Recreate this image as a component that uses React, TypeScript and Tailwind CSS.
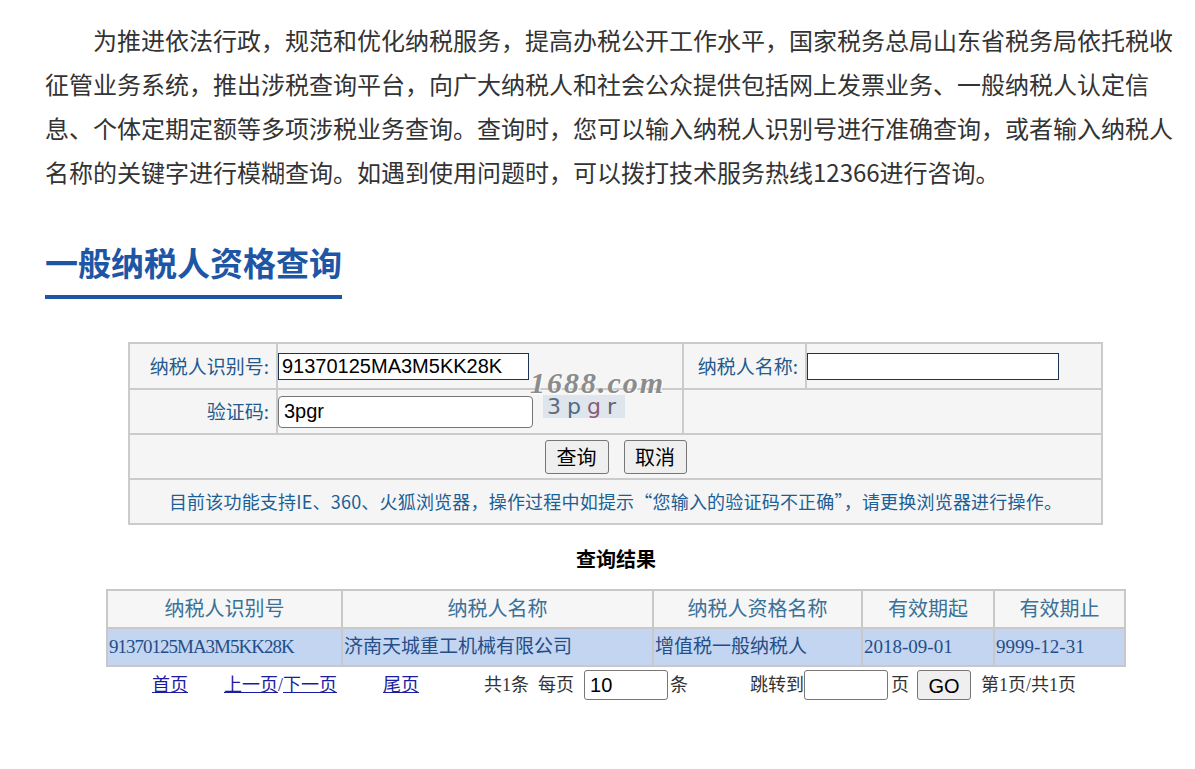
import React from 'react';

const cjk = '"Noto Sans CJK SC", "Noto Sans", sans-serif';
const serif = '"Liberation Serif", "Noto Sans CJK SC", serif';

const resultCols = [
  { title: '纳税人识别号', width: 'w-[235px]', value: '91370125MA3M5KK28K', extra: 'text-[18px] tracking-[-1px]' },
  { title: '纳税人名称', width: 'w-[311px]', value: '济南天城重工机械有限公司', extra: '' },
  { title: '纳税人资格名称', width: 'w-[209px]', value: '增值税一般纳税人', extra: '' },
  { title: '有效期起', width: 'w-[132px]', value: '2018-09-01', extra: 'text-[18px]' },
  { title: '有效期止', width: 'w-[131px]', value: '9999-12-31', extra: 'text-[18px]' },
];

const QueryForm: React.FC = () => (
  <div className="relative ml-[83px] mt-[43px] w-[973px]">
    <table className="w-[973px] table-fixed border-collapse border-2 border-[#cbcbcb] bg-[#f5f5f5] text-[19px]">
      <colgroup>
        <col className="w-[148px]" />
        <col className="w-[406px]" />
        <col className="w-[123px]" />
        <col className="w-[296px]" />
      </colgroup>
      <tbody>
        <tr className="h-[46px]">
          <td className="border-2 border-[#cbcbcb] pr-[7px] text-right text-[#245a8d]">纳税人识别号:</td>
          <td className="border-2 border-[#cbcbcb] pl-0">
            <input
              readOnly
              value="91370125MA3M5KK28K"
              className="block h-[27px] w-[251px] border border-[#1c3557] bg-white px-[3px] text-[20px] text-black outline-none [font-family:'Liberation_Sans',Arial,sans-serif]"
            />
          </td>
          <td className="border-2 border-[#cbcbcb] pr-[7px] text-right text-[#245a8d]">纳税人名称:</td>
          <td className="border-2 border-[#cbcbcb]">
            <input
              readOnly
              value=""
              className="block h-[27px] w-[252px] border border-[#1c3557] bg-white px-[3px] text-[20px] outline-none"
            />
          </td>
        </tr>
        <tr className="h-[45px]">
          <td className="border-2 border-[#cbcbcb] pr-[7px] text-right text-[#245a8d]">验证码:</td>
          <td className="border-2 border-[#cbcbcb]">
            <div className="flex items-center">
              <input
                readOnly
                value="3pgr"
                className="block h-[32px] w-[255px] rounded-[4px] border border-[#767676] bg-white px-[5px] text-[20px] text-black outline-none [font-family:'Liberation_Sans',Arial,sans-serif]"
              />
              <div className="ml-[10px] -mt-[10px] flex h-[23px] w-[82px] items-center bg-[#dfe5ec] pl-[4px] text-[22px] leading-none tracking-[6px] [font-family:'DejaVu_Sans',sans-serif]">
                <span className="text-[#5c6b7e]">3</span>
                <span className="text-[#4e6a86]">p</span>
                <span className="text-[#8a5a74]">g</span>
                <span className="text-[#5d6670]">r</span>
              </div>
            </div>
          </td>
          <td colSpan={2} className="border-2 border-[#cbcbcb]" />
        </tr>
        <tr className="h-[45px]">
          <td colSpan={4} className="border-2 border-[#cbcbcb] text-center">
            <div className="flex justify-center gap-[15px]">
              <button className="h-[34px] w-[64px] rounded-[3px] border border-[#767676] bg-[#efefef] text-[20px] text-black">查询</button>
              <button className="h-[34px] w-[63px] rounded-[3px] border border-[#767676] bg-[#efefef] text-[20px] text-black">取消</button>
            </div>
          </td>
        </tr>
        <tr className="h-[45px]">
          <td colSpan={4} className="border-2 border-[#cbcbcb] text-center text-[18px] tracking-[0.2px] text-[#1c5f95]">
            目前该功能支持IE、360、火狐浏览器，操作过程中如提示“您输入的验证码不正确”，请更换浏览器进行操作。
          </td>
        </tr>
      </tbody>
    </table>
    <span
      className="pointer-events-none absolute left-[402px] top-[26px] text-[30px] font-bold italic leading-none tracking-[2px] text-[#8c8c8c] [text-shadow:1px_1px_0_#ffffff]"
      style={{ fontFamily: serif }}
    >
      1688.com
    </span>
  </div>
);

const Results: React.FC = () => (
  <div style={{ fontFamily: serif }}>
    <div className="mt-[20px] h-[30px] pl-[37px] text-center text-[20px] font-bold leading-[30px] text-black">查询结果</div>
    <table className="ml-[61px] mt-[14px] w-[1018px] table-fixed border-collapse border-2 border-[#c8c8c8] text-[20px]">
      <colgroup>
        {resultCols.map((c) => (
          <col key={c.title} className={c.width} />
        ))}
      </colgroup>
      <thead>
        <tr className="h-[38px] bg-[#f6f6f6]">
          {resultCols.map((c) => (
            <th key={c.title} className="border-2 border-[#c8c8c8] text-center font-normal text-[#3a7196]">
              {c.title}
            </th>
          ))}
        </tr>
      </thead>
      <tbody>
        <tr className="h-[38px] bg-[#c3d5f0]">
          {resultCols.map((c) => (
            <td key={c.title} className={`border-2 border-[#c8c8c8] pl-[1px] text-left text-[19px] text-[#234e88] ${c.extra}`}>
              {c.value}
            </td>
          ))}
        </tr>
      </tbody>
    </table>
    <div className="ml-[61px] flex h-[36px] items-center text-[18px] text-[#333]">
      <a href="#" className="ml-[46px] text-[#1c1ca0] underline">首页</a>
      <span className="ml-[36px]">
        <a href="#" className="text-[#1c1ca0] underline">上一页</a>
        <span className="text-[#1c1ca0]">/</span>
        <a href="#" className="text-[#1c1ca0] underline">下一页</a>
      </span>
      <a href="#" className="ml-[46px] text-[#1c1ca0] underline">尾页</a>
      <span className="ml-[65px]">共1条&nbsp;&nbsp;每页</span>
      <input
        readOnly
        value="10"
        className="ml-[10px] h-[30px] w-[84px] rounded-[3px] border border-[#767676] bg-white px-[5px] text-[20px] text-black outline-none [font-family:'Liberation_Sans',Arial,sans-serif]"
      />
      <span className="ml-[2px]">条</span>
      <span className="ml-[62px]">跳转到</span>
      <input
        readOnly
        value=""
        className="h-[30px] w-[84px] rounded-[3px] border border-[#767676] bg-white outline-none"
      />
      <span className="ml-[3px]">页</span>
      <button className="ml-[8px] h-[30px] w-[54px] rounded-[3px] border border-[#767676] bg-[#efefef] text-[20px] text-black [font-family:'Liberation_Sans',Arial,sans-serif]">
        GO
      </button>
      <span className="ml-[10px]">第1页/共1页</span>
    </div>
  </div>
);

export default function App() {
  return (
    <div className="min-h-[769px] w-[1195px] bg-white px-[45px] pt-[18px]" style={{ fontFamily: cjk }}>
      <p className="w-[1130px] indent-[48px] text-[24px] leading-[44px] text-[#333333]">
        为推进依法行政，规范和优化纳税服务，提高办税公开工作水平，国家税务总局山东省税务局依托税收征管业务系统，推出涉税查询平台，向广大纳税人和社会公众提供包括网上发票业务、一般纳税人认定信息、个体定期定额等多项涉税业务查询。查询时，您可以输入纳税人识别号进行准确查询，或者输入纳税人名称的关键字进行模糊查询。如遇到使用问题时，可以拨打技术服务热线12366进行咨询。
      </p>
      <h2 className="mt-[48px] inline-block border-b-4 border-[#1e56a6] pb-[13px] text-[33px] font-bold leading-[40px] text-[#1e56a6]">
        一般纳税人资格查询
      </h2>
      <QueryForm />
      <Results />
    </div>
  );
}
